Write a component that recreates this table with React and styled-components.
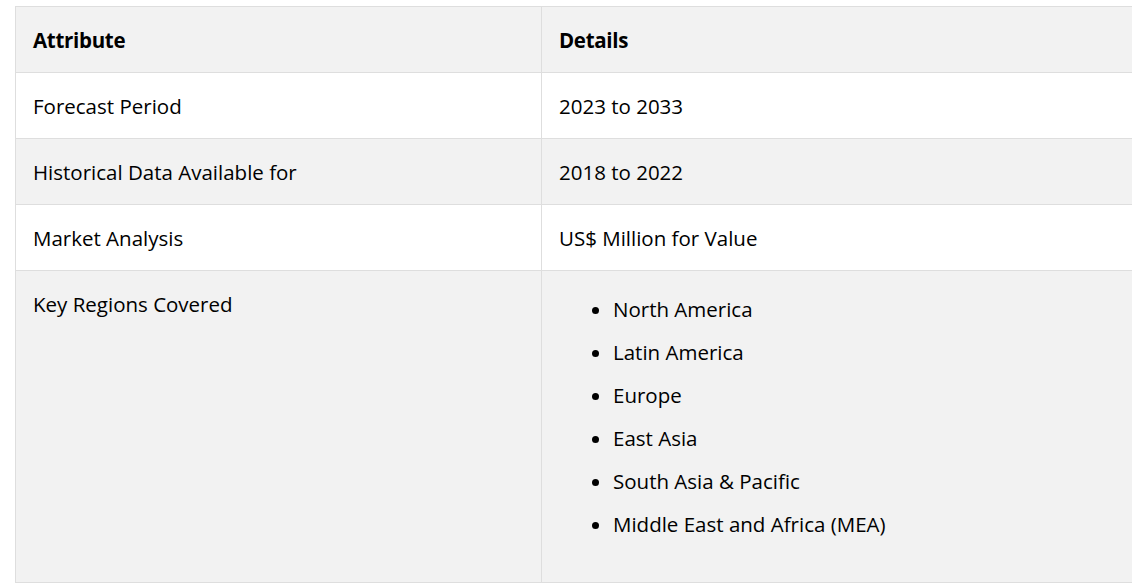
import styled, { createGlobalStyle } from 'styled-components';

const GlobalStyle = createGlobalStyle`
  html, body {
    margin: 0;
    padding: 0;
    background: #fff;
    overflow: hidden;
  }
  body {
    font-family: "Open Sans", "Noto Sans", "Liberation Sans", sans-serif;
    color: #000;
  }
`;

const Page = styled.div`
  padding: 6px 0 0 15px;
`;

const Table = styled.table`
  width: 1240px;
  border-collapse: collapse;
  border: 1px solid #dedede;
  font-size: 20.5px;
  line-height: 24px;
`;

const Row = styled.tr`
  background: ${(p) => (p.$shaded ? '#f2f2f2' : '#fff')};
`;

const Cell = styled.td`
  width: ${(p) => p.$width || 'auto'};
  padding: 21px 17px 20px;
  border: 1px solid #dedede;
  vertical-align: top;
  font-weight: ${(p) => (p.$head ? 700 : 400)};
  letter-spacing: ${(p) => (p.$head ? '-0.3px' : '0')};
`;

const RegionList = styled.ul`
  margin: 5px 0 26px;
  padding-left: 54px;
`;

const RegionItem = styled.li`
  line-height: 24px;
  margin-bottom: 19px;
  &:last-child {
    margin-bottom: 0;
  }
`;

const rows = [
  ['Forecast Period', '2023 to 2033'],
  ['Historical Data Available for', '2018 to 2022'],
  ['Market Analysis', 'US$ Million for Value'],
];

const regions = [
  'North America',
  'Latin America',
  'Europe',
  'East Asia',
  'South Asia & Pacific',
  'Middle East and Africa (MEA)',
];

const App = () => (
  <Page>
    <GlobalStyle />
    <Table>
      <tbody>
        <Row $shaded>
          <Cell $head $width="491px">Attribute</Cell>
          <Cell $head>Details</Cell>
        </Row>
        {rows.map(([attr, detail], i) => (
          <Row key={attr} $shaded={i % 2 === 1}>
            <Cell>{attr}</Cell>
            <Cell>{detail}</Cell>
          </Row>
        ))}
        <Row $shaded>
          <Cell>Key Regions Covered</Cell>
          <Cell>
            <RegionList>
              {regions.map((r) => (
                <RegionItem key={r}>{r}</RegionItem>
              ))}
            </RegionList>
          </Cell>
        </Row>
      </tbody>
    </Table>
  </Page>
);

export default App;
